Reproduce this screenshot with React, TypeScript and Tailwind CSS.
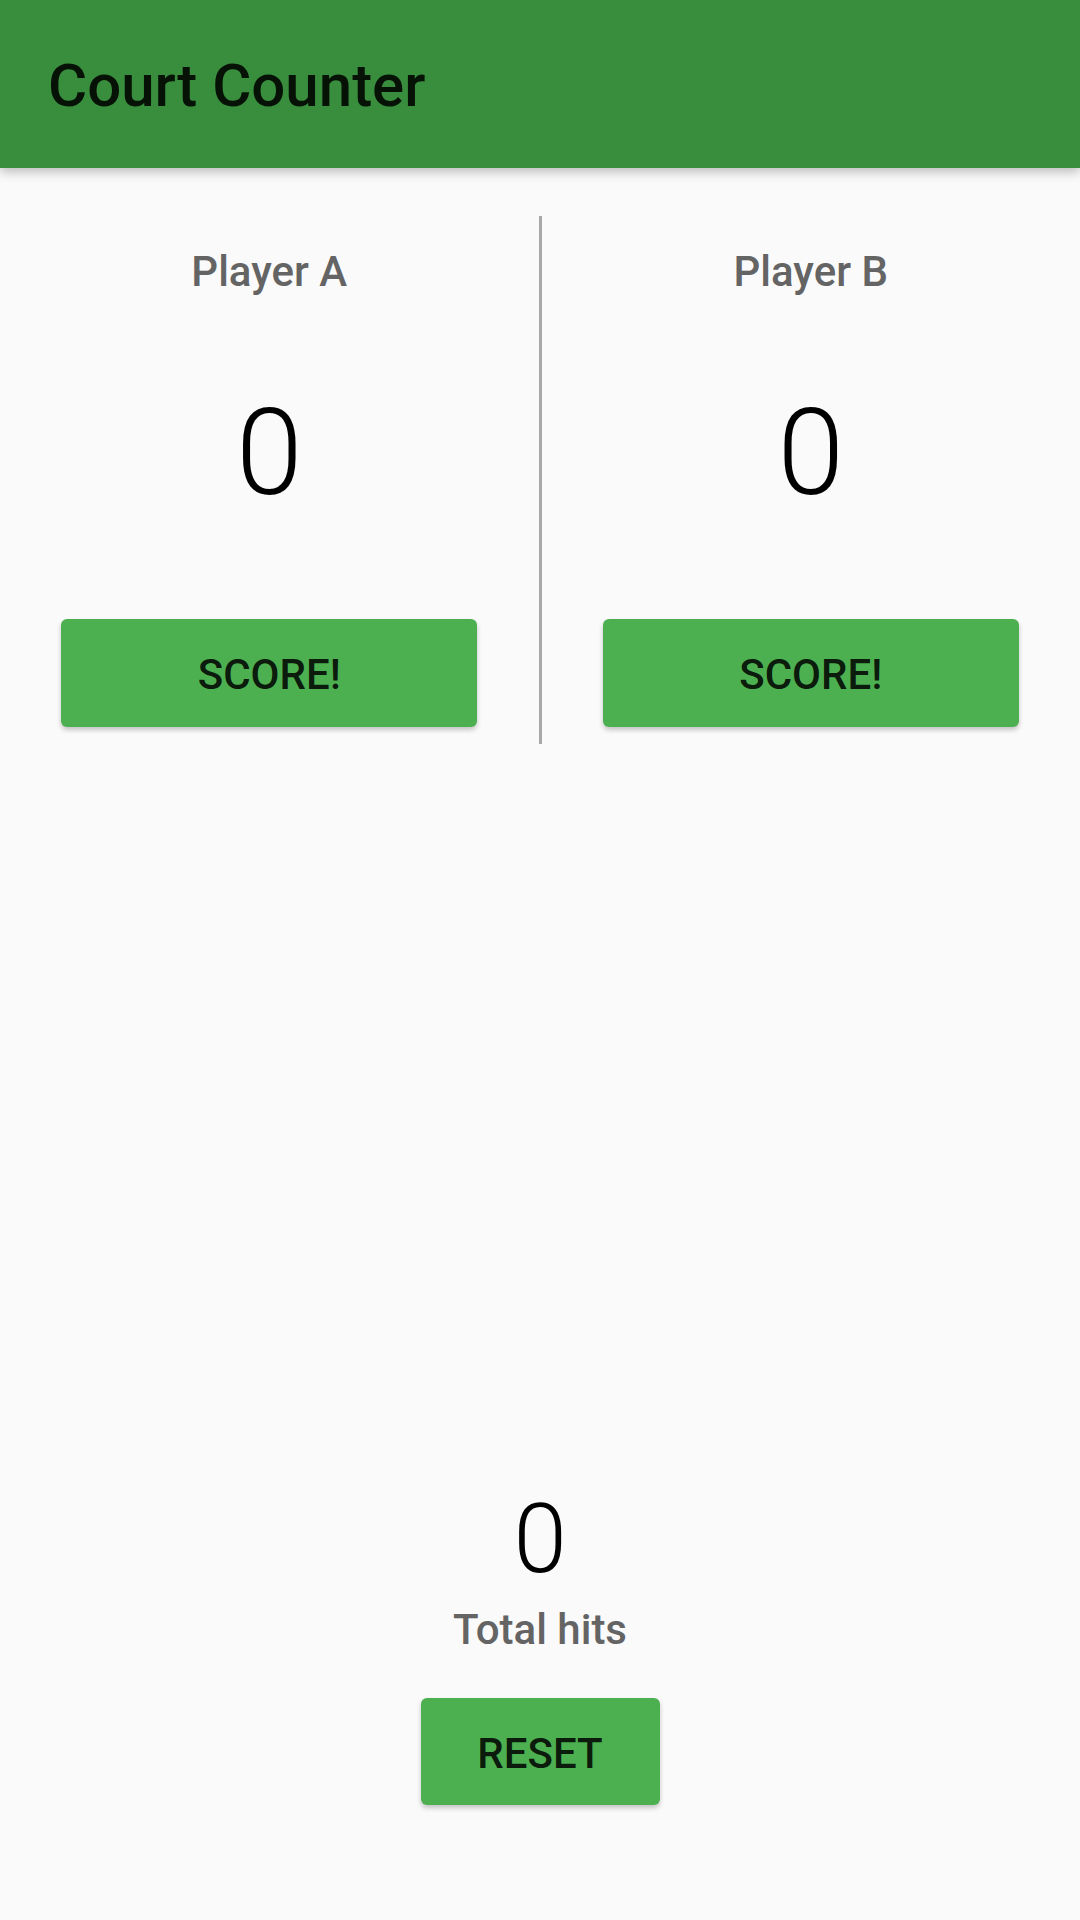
import React from "react";

function PlayerColumn({ name }: { name: string }) {
  return (
    <div className="flex flex-col items-center">
      <div className="mt-[31px] text-[42px] leading-[49px] font-medium text-[#646464]">{name}</div>
      <div className="mt-[87px] text-[120px] leading-[140px] font-light text-black">0</div>
      <button className="mt-[96px] w-[416px] h-[108px] rounded-[6px] bg-[#4CAF50] pt-[3px] text-[42px] font-medium text-[rgba(0,0,0,0.87)] shadow-[0_3px_5px_rgba(0,0,0,0.22)]">
        SCORE!
      </button>
    </div>
  );
}

export default function App() {
  return (
    <div
      className="flex h-[1920px] w-[1080px] flex-col bg-[#fafafa]"
      style={{ fontFamily: "Roboto, 'Noto Sans', sans-serif" }}
    >
      <header className="relative z-10 flex h-[168px] items-center bg-[#388E3C] pl-[48px] pt-[4px] shadow-[0_4px_10px_rgba(0,0,0,0.25)]">
        <h1 className="text-[60px] leading-[70px] font-medium text-[rgba(0,0,0,0.87)]">Court Counter</h1>
      </header>
      <main className="flex flex-1 flex-col">
        <div className="mt-[48px] grid h-[528px] grid-cols-[1fr_3px_1fr]">
          <PlayerColumn name="Player A" />
          <div className="bg-[#a8a8a8]" />
          <PlayerColumn name="Player B" />
        </div>
        <div className="mt-auto flex flex-col items-center pb-[115px]">
          <div className="text-[96px] leading-[112px] font-light text-black">0</div>
          <div className="mt-[10px] text-[42px] leading-[49px] font-medium text-[#646464]">Total hits</div>
          <button className="mt-[44px] w-[239px] h-[107px] rounded-[6px] bg-[#4CAF50] pt-[3px] text-[42px] font-medium text-[rgba(0,0,0,0.87)] shadow-[0_3px_5px_rgba(0,0,0,0.22)]">
            RESET
          </button>
        </div>
      </main>
    </div>
  );
}
